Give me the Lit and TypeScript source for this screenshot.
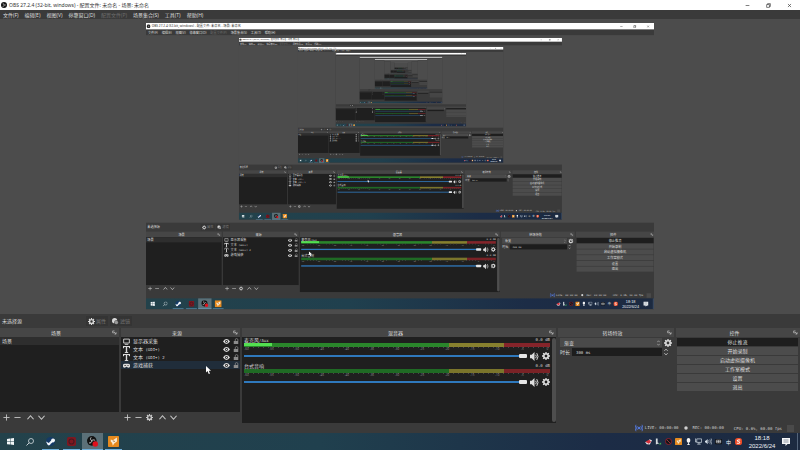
import { css, html, LitElement, nothing, svg, type TemplateResult } from 'lit';
import { customElement, property } from 'lit/decorators.js';
import { classMap } from 'lit/directives/class-map.js';
import { styleMap } from 'lit/directives/style-map.js';

// The display capture shows the desktop again inside the preview.
const MAX_DEPTH = 9;

// From this depth on, lettering is smaller than a pixel and is left out.
const TEXT_DEPTH = 4;

const POINTERS = [
  { left: '25.8%', top: '81.3%' },
  { left: '32%', top: '79.8%' },
  { left: '39.8%', top: '78%' },
];

const GEAR = svg`<circle cx="8" cy="8" r="4.4" fill="none" stroke="currentColor" stroke-width="3.2" />
  <path d="M8 0v3M8 13v3M0 8h3M13 8h3M2.3 2.3l2.2 2.2M11.5 11.5l2.2 2.2M13.7 2.3l-2.2 2.2M4.5 11.5l-2.2 2.2" stroke="currentColor" stroke-width="2.6" />`;

const ICONS: Record<string, TemplateResult> = {
  obs: svg`<circle cx="8" cy="8" r="8" fill="#151515" />
    <path d="M7 2.5a3.6 3.6 0 0 0 1.5 6M13.3 9a3.6 3.6 0 0 0-5.8-.6M4 12a3.6 3.6 0 0 0 4.6-4" fill="none" stroke="#c8c8c8" stroke-width="1.6" />`,
  minimize: svg`<path d="M2 8h12" stroke="currentColor" stroke-width="2" />`,
  restore: svg`<path d="M2 5h9v9H2zM5 5V2h9v9h-3" fill="none" stroke="currentColor" stroke-width="2" />`,
  close: svg`<path d="M3 3l10 10M13 3L3 13" stroke="currentColor" stroke-width="2" />`,
  gear: GEAR,
  filter: svg`<circle cx="6" cy="6" r="6" fill="currentColor" /><circle cx="10" cy="10" r="5" fill="#3a3a3a" />
    <circle cx="10" cy="10" r="4" fill="currentColor" opacity=".6" />`,
  popout: svg`<path d="M2 3h6M2 3v6h6M6 6l7 7M13 7v6H8" fill="none" stroke="currentColor" stroke-width="2.4" />`,
  plus: svg`<path d="M8 1v14M1 8h14" stroke="currentColor" stroke-width="2" />`,
  minus: svg`<path d="M1 8h14" stroke="currentColor" stroke-width="2" />`,
  up: svg`<path d="M1 12l7-8 7 8" fill="none" stroke="currentColor" stroke-width="2.6" />`,
  down: svg`<path d="M1 4l7 8 7-8" fill="none" stroke="currentColor" stroke-width="2.6" />`,
  monitor: svg`<path d="M1.5 2.5h13v9h-13zM4 14.5h8" fill="none" stroke="currentColor" stroke-width="2" />`,
  type: svg`<path d="M0 0h16v5h-2l-1-2.6H9.6V13.5l2.4.5v2H4v-2l2.4-.5V2.4H3L2 5H0z" fill="currentColor" />`,
  gamepad: svg`<path d="M4 4h8a4 4 0 0 1 0 9c-2 0-2-2-4-2s-2 2-4 2a4 4 0 0 1 0-9z" fill="currentColor" />
    <path d="M3 8h4M10 8h3" stroke="#1f1f1f" stroke-width="1.6" />`,
  eye: svg`<path d="M0 8q8-11 16 0q-8 11-16 0z" fill="currentColor" /><circle cx="8" cy="8" r="3.2" fill="#1f1f1f" />
    <circle cx="8" cy="8" r="1.5" fill="currentColor" />`,
  lock: svg`<path d="M2 8h12v8H2z" fill="currentColor" /><path d="M6 8V5a3.5 3.5 0 0 1 7 0v3" fill="none" stroke="currentColor" stroke-width="2" />`,
  speaker: svg`<path d="M0 5h3l5-5v16l-5-5H0z" fill="currentColor" />
    <path d="M10 5q2.4 3 0 6M12 2q4.5 6 0 12" fill="none" stroke="currentColor" stroke-width="1.7" />`,
  live: svg`<circle cx="8" cy="8" r="2.6" fill="currentColor" />
    <path d="M4.5 4q-3 4 0 8M11.5 4q3 4 0 8M2 1.5q-4 6.5 0 13M14 1.5q4 6.5 0 13" fill="none" stroke="currentColor" stroke-width="1.8" />`,
  dot: svg`<circle cx="8" cy="8" r="7" fill="currentColor" />`,
  windows: svg`<path d="M0 2l7-1v6.5H0zM8 1l8-1v7.5H8zM0 8.500h7V15l-7-1zM8 8.500h8V16l-8-1z" fill="#f2f6f8" />`,
  search: svg`<circle cx="10" cy="6" r="5" fill="none" stroke="#dfe6ea" stroke-width="1.500" /><path d="M6.500 9.500L1 15" stroke="#dfe6ea" stroke-width="1.700" />`,
  steam: svg`<circle cx="8" cy="8" r="8" fill="#153a66" /><path d="M0 8l5 2.500 4-4.500a3.500 3.500 0 1 1 3 3.500L8 12.500a3 3 0 0 1-5.500 1z" fill="#f0f4f8" />`,
  redApp: svg`<rect width="16" height="16" rx="3" fill="#7c1821" /><circle cx="8" cy="8" r="4.500" fill="none" stroke="#4a1820" stroke-width="2" />`,
  obsLive: svg`<circle cx="7" cy="7" r="7" fill="#111" /><path d="M6 2a3 3 0 0 0 1.500 5M12 7a3 3 0 0 0-5 0M3 10a3 3 0 0 0 4-3" fill="none" stroke="#ccc" stroke-width="1.400" />
    <circle cx="12" cy="11.500" r="4" fill="#e0101c" />`,
  orangeApp: svg`<rect width="16" height="16" rx="1" fill="#e58a1f" /><path d="M4 5l3 1 6-4v6l-4 3-2 3-1-4-2-2z" fill="#f9ead2" /><path d="M7 7l3 1" stroke="#7a4a10" />`,
  bird: svg`<path d="M0 9l7 1 3-7 6 2-5 10-7-1z" fill="#e9e4e8" /><path d="M1 8l9-4 4 5-6 4z" fill="#d3303c" />`,
  meter: svg`<path d="M2 1h4v9l4 2-8 3z" fill="#d6dde0" /><path d="M8 14l6-4v5z" fill="#3fb558" />`,
  tray: svg`<circle cx="8" cy="8" r="7" fill="#141418" stroke="#b5202b" stroke-width="1.600" /><path d="M4 4l8 8" stroke="#d94a50" stroke-width="1.400" />`,
  mic: svg`<rect x="4" y="0" width="8" height="11" rx="4" fill="#f4f4f4" /><path d="M8 10v6M5 15h6" stroke="#f4f4f4" stroke-width="2" />`,
  network: svg`<path d="M4 2h11v8H4zM9 10v4M5 14h8M1 1v8h3" fill="none" stroke="#d5dfe8" stroke-width="1.600" />`,
  volume: svg`<path d="M0 6h2l4-4v12l-4-4H0z" fill="#d5dfe8" /><path d="M8 5q2 3 0 6M11 3q3.500 5 0 10M14 1q4 7 0 14" fill="none" stroke="#d5dfe8" stroke-width="1.300" />`,
  keyboard: svg`<rect y="2" width="16" height="12" rx="2" fill="#0f1115" /><path d="M3 5h10v6H3zM8 5v6M3 8h10" fill="none" stroke="#d9dde0" stroke-width="1.400" />`,
  sogou: svg`<rect width="16" height="16" rx="6" fill="#ea4a26" /><path d="M12 4.500H6q-3 3 2 3.500t2 4H4" fill="none" stroke="#fff" stroke-width="2.200" />`,
  message: svg`<path d="M0 0h16v12h-5l-4 4v-4H0z" fill="#f4f6f8" /><path d="M3 4h10M3 8h10" stroke="#51606f" stroke-width="1.200" />`,
};

const icon = (name: string, size = 7) =>
  html`<svg class="icon" width=${size} height=${size} viewBox="0 0 16 16" aria-hidden="true">${ICONS[name]}</svg>`;

const shared = css`
  * {
    box-sizing: border-box;
  }
  .icon {
    display: block;
    flex: none;
  }
  button,
  input,
  select {
    font: inherit;
    color: inherit;
    margin: 0;
    padding: 0;
    border: 0;
    background: none;
    border-radius: 0;
    appearance: none;
    outline: none;
    min-width: 0;
  }
  button {
    display: flex;
    align-items: center;
    justify-content: center;
    white-space: nowrap;
  }
  .mono {
    font-family: 'DejaVu Sans Mono', monospace;
    font-size: 4px;
    white-space: pre;
  }
`;

@customElement('obs-dock')
export class ObsDock extends LitElement {
  static override styles = [
    shared,
    css`
      :host {
        display: flex;
        flex-direction: column;
        min-width: 0;
      }
      .header {
        display: flex;
        align-items: center;
        height: 9px;
        padding-right: 2px;
        background: #464646;
        color: #dcdcdc;
      }
      .title {
        flex: 1;
        margin: 0;
        font-size: 5px;
        font-weight: 400;
        text-align: center;
      }
      .popout {
        color: #b8b8b8;
      }
      .body {
        flex: 1;
        display: flex;
        flex-direction: column;
      }
    `,
  ];

  @property() name = '';

  override render() {
    return html`
      <div class="header">
        <h2 class="title">${this.name}</h2>
        <button class="popout" aria-label="浮动">${icon('popout', 5)}</button>
      </div>
      <div class="body"><slot></slot></div>
    `;
  }
}

@customElement('obs-channel')
export class ObsChannel extends LitElement {
  static override styles = [
    shared,
    css`
      :host {
        display: block;
        padding-bottom: 3px;
        color: #d0d0d0;
      }
      .caption {
        display: flex;
        align-items: center;
        justify-content: space-between;
        height: 6px;
      }
      .meter {
        height: 4px;
        background: linear-gradient(90deg, #1f6a24 67%, #7b752b 67% 85%, #7a2226 85%);
      }
      .active {
        background: linear-gradient(90deg, #2a862b 67%, #87802e 67% 85%, #85242a 85%);
      }
      .level {
        height: 3px;
        background: #52df50;
      }
      .scale {
        display: flex;
        justify-content: space-between;
        height: 5px;
        background: repeating-linear-gradient(90deg, transparent 0 4px, #484848 4px 5px) 0 0 / 100% 1px no-repeat;
        font-size: 3px;
        line-height: 3px;
        color: #8c8c8c;
      }
      .tick {
        width: 5px;
        padding-top: 1px;
        text-align: center;
      }
      .controls {
        display: flex;
        align-items: center;
        gap: 3px;
        height: 8px;
        color: #dedede;
      }
      .slider {
        flex: 1;
        height: 4px;
        background: linear-gradient(#2f79bd, #2f79bd) center / 100% 2px no-repeat;
      }
      .slider::-webkit-slider-thumb {
        appearance: none;
        width: 8px;
        height: 4px;
        border-radius: 1px;
        background: #e6e6e6;
      }
    `,
  ];

  @property({ type: Number }) level = 0;
  @property({ type: Boolean }) plain = false;

  override render() {
    const ticks = Array.from({ length: 13 }, (_, i) => i * 5 - 60);
    return html`
      <div class="caption">
        <label for="volume"><slot></slot></label>
        ${this.plain ? nothing : html`<span class="mono">0.0 dB</span>`}
      </div>
      <div class=${classMap({ meter: true, active: this.level > 0 })}>
        <div class="level" style=${styleMap({ width: `${this.level}%` })}></div>
      </div>
      <div class="scale">${this.plain ? nothing : ticks.map((t) => html`<span class="tick">${t}</span>`)}</div>
      <div class="controls">
        <input class="slider" id="volume" type="range" min="0" max="100" value="100" />
        <button aria-label="静音">${icon('speaker', 9)}</button>
        <button aria-label="设置">${icon('gear', 8)}</button>
      </div>
    `;
  }
}

@customElement('obs-desktop')
export class ObsDesktop extends LitElement {
  static override styles = [
    shared,
    css`
      :host {
        --mirror: 0.636;
        position: relative;
        display: flex;
        flex-direction: column;
        width: 100%;
        height: 100%;
        overflow: hidden;
        background: #3a3a3a;
        color: #dcdcdc;
        font: 5px/6px 'Noto Sans', 'Noto Sans CJK SC', sans-serif;
      }
      .titlebar {
        display: flex;
        align-items: center;
        gap: 2px;
        height: 10px;
        padding: 0 1px;
        background: #fff;
        color: #333;
      }
      .caption {
        flex: 1;
      }
      .window-button {
        width: 19px;
        height: 9px;
      }
      .menu {
        display: flex;
        align-items: center;
        gap: 6px;
        height: 9px;
        padding: 0 3px;
      }
      .menu button:disabled {
        color: #6c6c6c;
      }
      .preview {
        flex: 1;
        min-height: 0;
        display: grid;
        place-content: center;
        background: #4c4c4c;
      }
      .capture {
        width: calc(100vw * var(--mirror));
        height: calc(100vh * var(--mirror));
        overflow: hidden;
      }
      .screen {
        width: 100vw;
        height: 100vh;
        transform: scale(var(--mirror));
        transform-origin: 0 0;
      }
      .context {
        display: flex;
        align-items: center;
        gap: 2px;
        height: 14px;
        padding: 0 2px;
      }
      .context-name {
        width: 82px;
      }
      .context-button {
        gap: 1px;
        height: 10px;
        padding: 0 2px;
        background: #343434;
        color: #777;
      }
      .context-button .icon {
        color: #d8d8d8;
      }
      .docks {
        display: flex;
        gap: 2px;
      }
      .list-dock {
        flex: 119 1 0;
      }
      .mixer {
        flex: 314 1 0;
      }
      .transitions {
        flex: 116 1 0;
      }
      .controls {
        flex: 124 1 0;
      }
      .list {
        flex: 1;
        min-height: 75px;
        margin: 0;
        padding: 0;
        list-style: none;
        background: #1f1f1f;
      }
      .scene {
        height: 8px;
        padding: 1px 2px;
        background: #2e2e2e;
      }
      .source {
        display: flex;
        align-items: center;
        gap: 3px;
        height: 8px;
        padding: 0 1px 0 2px;
      }
      .hovered {
        background: #202d3a;
      }
      .source-name {
        flex: 1;
      }
      .lock {
        color: #8c8c8c;
      }
      .tools {
        display: flex;
        align-items: center;
        justify-content: flex-start;
        gap: 6px;
        height: 11px;
        padding: 0 3px;
        color: #c8c8c8;
      }
      .tool-group {
        display: flex;
        gap: 4px;
      }
      .mixer-body {
        flex: 1;
        display: flex;
        gap: 2px;
        padding-left: 2px;
        background: #1f1f1f;
      }
      .channels {
        flex: 1;
      }
      .scrollbar {
        width: 4px;
        margin: 1px 0;
        border-radius: 2px;
        background: #4e4e4e;
      }
      .fields {
        display: grid;
        grid-template-columns: auto 1fr auto;
        align-items: center;
        gap: 1px 2px;
        padding: 1px 2px;
      }
      .select-wrap {
        grid-column: 1 / 3;
        display: flex;
        align-items: center;
        height: 9px;
        padding: 0 2px 0 4px;
        background: #4a4a4a;
      }
      .transition {
        flex: 1;
      }
      .duration {
        width: 100%;
        height: 8px;
        padding: 0 4px;
        background: #1d1d1d;
      }
      .buttons {
        display: flex;
        flex-direction: column;
        gap: 1px;
        padding: 1px 2px 1px 1px;
      }
      .control {
        height: 8px;
        background: #4c4c4c;
      }
      .pressed {
        background: #1e1e1e;
      }
      .status {
        display: flex;
        align-items: center;
        justify-content: flex-end;
        gap: 5px;
        height: 10px;
        padding-right: 6px;
        color: #d0d0d0;
      }
      .live {
        margin-right: -3px;
        color: #5277d8;
      }
      .cpu {
        margin-left: 5px;
      }
      .grip {
        width: 7px;
        height: 7px;
        background: #4a4a4a;
      }
      .taskbar {
        display: flex;
        height: 17px;
        background: linear-gradient(90deg, #23424b, #20404e 40%, #1c2c46 75%, #1c2a40);
        color: #f0f4f8;
      }
      .app {
        width: 20px;
      }
      .running {
        width: 21px;
        background: linear-gradient(#6fb0dc, #6fb0dc) center bottom / 17px 1px no-repeat;
      }
      .current {
        background-color: #5b7078;
        background-size: 100% 1px;
      }
      .notices {
        display: flex;
        align-items: center;
        gap: 3px;
        margin-left: auto;
      }
      .ime {
        width: 7px;
        text-align: center;
      }
      .clock {
        width: 34px;
        font-family: 'Liberation Sans', sans-serif;
        font-size: 6px;
        line-height: 8px;
        text-align: center;
      }
      .desktop-edge {
        height: 100%;
        margin-left: 4px;
        padding-right: 2px;
        border-left: 1px solid #53647a;
      }
      .pointer {
        position: absolute;
        width: 5px;
        height: 8px;
      }
    `,
  ];

  @property({ type: Number }) depth = 0;

  private menus = ['文件(F)', '编辑(E)', '视图(V)', '停靠窗口(D)', '配置文件(P)', '场景集合(S)', '工具(T)', '帮助(H)'];

  private sources = [
    { kind: 'monitor', name: '显示器采集', suffix: '' },
    { kind: 'type', name: '文本', suffix: ' (GDI+)' },
    { kind: 'type', name: '文本', suffix: ' (GDI+) 2' },
    { kind: 'gamepad', name: '游戏捕获', suffix: '' },
  ];

  private actions = ['停止推流', '开始录制', '启动虚拟摄像机', '工作室模式', '设置', '退出'];

  private get plain() {
    return this.depth >= TEXT_DEPTH;
  }

  private text(value: string) {
    return this.plain ? nothing : value;
  }

  private mono(value: string) {
    return this.plain || !value ? nothing : html`<span class="mono">${value}</span>`;
  }

  private tool(name: string, label: string, size = 7) {
    return html`<button aria-label=${label}>${icon(name, size)}</button>`;
  }

  private renderPreview() {
    if (this.depth >= MAX_DEPTH) return nothing;
    return html`
      <div class="capture">
        <div class="screen"><obs-desktop .depth=${this.depth + 1} aria-hidden="true"></obs-desktop></div>
      </div>
    `;
  }

  private renderTools(withProperties: boolean) {
    return html`
      <div class="tools">
        <div class="tool-group">
          ${this.tool('plus', '添加')} ${this.tool('minus', '移除')}
          ${withProperties ? this.tool('gear', '属性') : nothing}
        </div>
        <div class="tool-group">${this.tool('up', '上移')} ${this.tool('down', '下移')}</div>
      </div>
    `;
  }

  private renderDocks() {
    return html`
      <div class="docks">
        <obs-dock class="list-dock" .name=${this.plain ? '' : '场景'}>
          <ul class="list">
            <li class="scene">${this.text('场景')}</li>
          </ul>
          ${this.renderTools(false)}
        </obs-dock>
        <obs-dock class="list-dock" .name=${this.plain ? '' : '来源'}>
          <ul class="list">
            ${this.sources.map(
              (s, i) => html`
                <li class=${classMap({ source: true, hovered: i === 3 && this.depth === 0 })}>
                  ${icon(s.kind)}
                  <span class="source-name">${this.text(s.name)}${this.mono(s.suffix)}</span>
                  <button aria-label="可见">${icon('eye')}</button>
                  <button class="lock" aria-label="锁定">${icon('lock', 6)}</button>
                </li>
              `,
            )}
          </ul>
          ${this.renderTools(true)}
        </obs-dock>
        <obs-dock class="mixer" .name=${this.plain ? '' : '混音器'}>
          <div class="mixer-body">
            <div class="channels">
              <obs-channel .level=${9} .plain=${this.plain}>${this.text('麦克风')}${this.mono('/Aux')}</obs-channel>
              <obs-channel .plain=${this.plain}>${this.text('台式音响')}</obs-channel>
            </div>
            <div class="scrollbar"></div>
          </div>
        </obs-dock>
        <obs-dock class="transitions" .name=${this.plain ? '' : '转场特效'}>
          <div class="fields">
            <div class="select-wrap">
              <select class="transition" aria-label="转场特效">
                ${this.plain ? nothing : html`<option>渐变</option>`}
              </select>
              <div>${icon('up', 3)}${icon('down', 3)}</div>
            </div>
            ${this.tool('gear', '转场设置', 8)}
            <label for="duration">${this.text('时长')}</label>
            <input class="duration mono" id="duration" type="text" .value=${this.plain ? '' : '300 ms'} />
            <div>${this.tool('up', '增加', 4)}${this.tool('down', '减少', 4)}</div>
          </div>
        </obs-dock>
        <obs-dock class="controls" .name=${this.plain ? '' : '控件'}>
          <div class="buttons">
            ${this.actions.map(
              (a, i) => html`<button class=${classMap({ control: true, pressed: i === 0 })}>${this.text(a)}</button>`,
            )}
          </div>
        </obs-dock>
      </div>
    `;
  }

  private renderStatus() {
    return html`
      <div class="status">
        <span class="live">${icon('live', 8)}</span>
        ${this.mono('LIVE: 00:00:00')} ${icon('dot', 4)} ${this.mono('REC: 00:00:00')}
        <span class="cpu">${this.mono('CPU: 0.6%, 60.00 fps')}</span>
        <span class="grip"></span>
      </div>
    `;
  }

  private renderTaskbar() {
    return html`
      <div class="taskbar">
        <button class="app" aria-label="开始">${icon('windows', 7)}</button>
        <button class="app" aria-label="搜索">${icon('search', 8)}</button>
        <button class="app running" aria-label="Steam">${icon('steam', 9)}</button>
        <button class="app running" aria-label="应用">${icon('redApp', 9)}</button>
        <button class="app running current" aria-label="OBS">${icon('obsLive', 11)}</button>
        <button class="app running" aria-label="应用">${icon('orangeApp', 11)}</button>
        <div class="notices">
          ${['bird', 'meter', 'tray', 'orangeApp', 'mic', 'network', 'volume', 'keyboard'].map((n) => icon(n))}
          <span class="ime">${this.text('中')}</span>
          ${icon('sogou')}
          <time class="clock">${this.text('18:18')}<br />${this.text('2022/6/24')}</time>
          ${icon('message', 8)}
          <span class="desktop-edge"></span>
        </div>
      </div>
    `;
  }

  override render() {
    const pointer = POINTERS[this.depth];
    return html`
      <div class="titlebar">
        ${icon('obs', 6)}
        <span class="caption">${this.text('OBS 27.2.4 (32-bit, windows) - 配置文件: 未命名 - 场景: 未命名')}</span>
        ${['minimize', 'restore', 'close'].map(
          (n) => html`<button class="window-button" aria-label=${n}>${icon(n, 5)}</button>`,
        )}
      </div>
      <nav class="menu">
        ${this.menus.map((m) => html`<button ?disabled=${m.startsWith('配置')}>${this.text(m)}</button>`)}
      </nav>
      <div class="preview">${this.renderPreview()}</div>
      <div class="context">
        <span class="context-name">${this.text('未选择源')}</span>
        <button class="context-button">${icon('gear')}${this.text('属性')}</button>
        <button class="context-button">${icon('filter')}${this.text('滤镜')}</button>
      </div>
      ${this.renderDocks()} ${this.renderStatus()} ${this.renderTaskbar()}
      ${pointer
        ? html`<svg class="pointer" style=${styleMap(pointer)} viewBox="0 0 10 16" aria-hidden="true">
            <path d="M0 0v13l3-3 2.500 6 2.500-1-2.500-5.500H10z" fill="#fff" />
          </svg>`
        : nothing}
    `;
  }
}

@customElement('app-root')
export class AppRoot extends LitElement {
  static override styles = css`
    :host {
      display: block;
      height: 100vh;
    }
  `;

  override render() {
    return html`<obs-desktop></obs-desktop>`;
  }
}

declare global {
  interface HTMLElementTagNameMap {
    'obs-dock': ObsDock;
    'obs-channel': ObsChannel;
    'obs-desktop': ObsDesktop;
    'app-root': AppRoot;
  }
}
